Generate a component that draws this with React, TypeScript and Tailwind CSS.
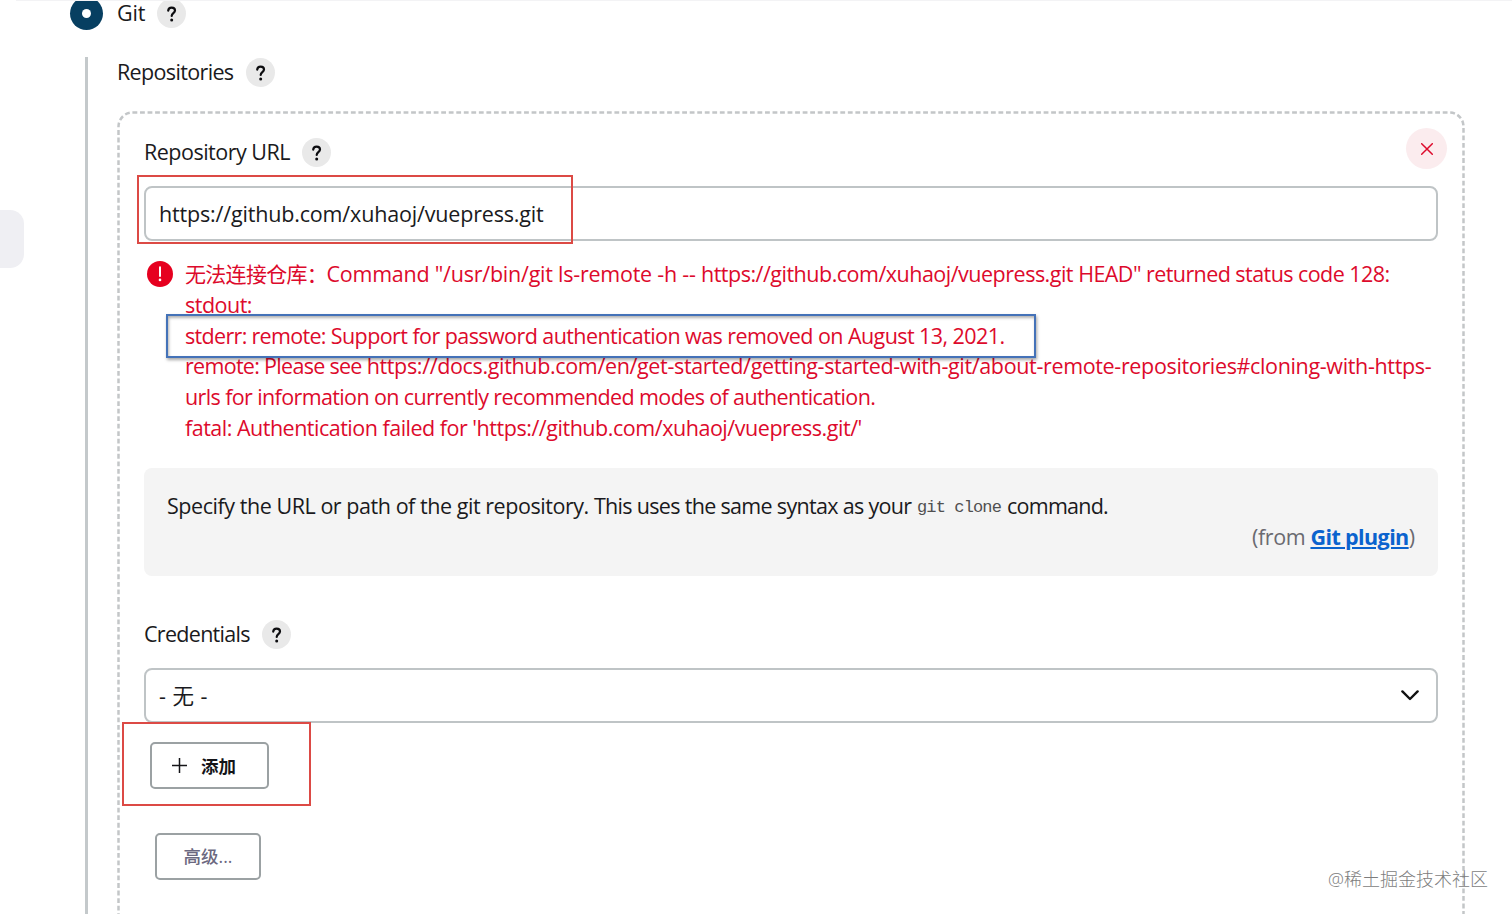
import { ReactNode } from "react"

function HelpButton() {
  return (
    <button className="size-[29px] shrink-0 rounded-full bg-[#e9e9e9]">
      <svg viewBox="0 0 29 29" className="block size-[29px]" fill="none">
        <path
          d="M11.2 11.6c.2-1.9 1.5-3 3.4-3s3.4 1.2 3.4 2.9c0 2.6-3.3 2.7-3.3 5.4"
          stroke="#0c0c0f"
          strokeWidth="2.2"
          strokeLinecap="round"
        />
        <circle cx="14.7" cy="20.9" r="1.5" fill="#0c0c0f" />
      </svg>
    </button>
  )
}

function Label({ children }: { children: ReactNode }) {
  return (
    <div className="flex h-[30px] items-center gap-3 leading-[30px] whitespace-nowrap">
      {children}
      <HelpButton />
    </div>
  )
}

function ErrorMessage() {
  return (
    <div className="flex gap-[12px] pl-[3px] text-[#dd0a2c]">
      <svg viewBox="0 0 26 26" className="mt-[2px] size-[26px] shrink-0">
        <circle cx="13" cy="13" r="13" fill="#e6001f" />
        <path d="M13 6.3v8.8" stroke="#fff" strokeWidth="2" strokeLinecap="round" />
        <circle cx="13" cy="18.9" r="1.3" fill="#fff" />
      </svg>
      <div className="leading-[30.8px] whitespace-nowrap">
        <p className="flex whitespace-pre">
          <span className="w-[141.5px] text-[21px] tracking-[-0.7px]">无法连接仓库：</span>
          <span className="tracking-[-0.235px]">Command "/usr/bin/git ls-remote -h -- </span>
          <span className="tracking-[-0.5px]">https://github.com/xuhaoj/vuepress.git </span>
          <span className="tracking-[-0.56px]">HEAD" returned status code 128:</span>
        </p>
        <p className="tracking-[-0.5px]">stdout:</p>
        <p className="tracking-[-0.57px]">
          <span className="tracking-[-0.68px]">stderr: remote: </span>
          Support for password authentication was removed on August 13, 2021.
        </p>
        <p className="tracking-[-0.345px]">
          <span className="tracking-[-0.7px]">remote: Please see </span>
          https://docs.github.com/en/get-started/getting-started-with-git/about-remote-repositories#cloning-with-https-
        </p>
        <p className="tracking-[-0.62px]">urls for information on currently recommended modes of authentication.</p>
        <p className="tracking-[-0.46px]">
          <span className="tracking-[-0.5px]">fatal: Authentication failed for </span>
          'https://github.com/xuhaoj/vuepress.git/'
        </p>
      </div>
    </div>
  )
}

function HelpPanel() {
  return (
    <div className="h-[108px] rounded-[8px] bg-[#f4f4f4] px-[23px] pt-[22px] leading-[31px]">
      <p className="flex whitespace-nowrap">
        <span className="w-[750px] tracking-[-0.68px]">
          <span className="tracking-[-0.45px]">Specify the URL or path of the git repository. </span>
          This uses the same syntax as your
        </span>
        <code className="w-[90px] pt-[2px] font-['Liberation_Mono',monospace] text-[17px] tracking-[-0.87px] text-[#505050]">
          git clone
        </code>
        <span className="tracking-[-0.75px]">command.</span>
      </p>
      <p className="-mt-[2px] text-right text-[#6a6a70]">
        <span className="tracking-[-0.4px]">(from </span>
        <a className="font-bold tracking-[-0.6px] text-[#0b63ce] underline decoration-2 underline-offset-2">
          Git plugin
        </a>
        )
      </p>
    </div>
  )
}

function RepositoryCard() {
  return (
    <section className="relative h-[820px] w-[1348px] pt-[26px] pl-[27px]">
      <svg className="pointer-events-none absolute inset-0 size-full" fill="none">
        <rect
          x="1.5"
          y="1.5"
          width="1345"
          height="900"
          rx="14"
          stroke="#c3c6c8"
          strokeWidth="2.5"
          strokeDasharray="4.8 2.73"
        />
      </svg>
      <button className="absolute top-[17px] right-[18px] flex size-[41px] items-center justify-center rounded-full bg-[#fbecee]">
        <svg viewBox="0 0 12 12" className="size-3" stroke="#dd0a2c" strokeWidth="1.5" strokeLinecap="round">
          <path d="M.7.7l10.6 10.6M11.3.7L.7 11.3" />
        </svg>
      </button>

      <div className="w-[1294px]">
        <Label>
          <span className="tracking-[-0.5px]">Repository URL</span>
        </Label>
        <div className="relative mt-[19px]">
          <div className="flex h-[55px] items-center rounded-[8px] border-2 border-[#bfc4c6] pt-[2px] pl-[13px]">
            <span className="tracking-[-0.17px]">https://github.com/xuhaoj/vuepress.git</span>
          </div>
          <div className="absolute top-[-11px] left-[-7px] h-[69px] w-[436px] border-2 border-[#dc4a45]" />
        </div>

        <div className="relative mt-[18px]">
          <ErrorMessage />
          <div className="absolute top-[55px] left-[22px] h-[44px] w-[870px] border-[2.5px] border-[#4472b8] shadow-[1px_2px_3px_rgba(0,0,0,0.35),inset_1px_2px_3px_rgba(0,0,0,0.3)]" />
        </div>

        <div className="mt-[24px]">
          <HelpPanel />
        </div>

        <div className="mt-[44px]">
          <Label>
            <span className="-mt-[2px] tracking-[-0.7px]">Credentials</span>
          </Label>
        </div>
        <div className="mt-[18px] flex h-[55px] items-center justify-between rounded-[8px] border-2 border-[#bfc4c6] pr-[17px] pl-[13px]">
          <span className="pt-px tracking-[0.5px]">- 无 -</span>
          <svg viewBox="0 0 18 11" className="h-[11px] w-[18px]" fill="none" stroke="#111" strokeWidth="2.4">
            <path d="M1.4 1.4L9 9l7.6-7.6" strokeLinecap="round" strokeLinejoin="round" />
          </svg>
        </div>

        <div className="relative mt-[19px] ml-[6px] w-[119px]">
          <button className="flex h-[47px] w-[119px] items-center gap-[14px] rounded-[5px] border-2 border-[#9ba1a3] pt-px pl-[20px] text-[17.5px] font-bold text-[#141418]">
            <svg viewBox="0 0 15 15" className="size-[15px]" stroke="#141418" strokeWidth="1.5">
              <path d="M7.5 0v15M0 7.5h15" />
            </svg>
            添加
          </button>
          <div className="absolute top-[-20px] left-[-28px] h-[84px] w-[189px] border-2 border-[#dc4a45]" />
        </div>

        <button className="mt-[44px] ml-[11px] block h-[47px] w-[106px] rounded-[5px] border-2 border-[#9ba1a3] text-[17.5px] font-medium text-[#6b6880]">
          高级...
        </button>
      </div>
    </section>
  )
}

export default function App() {
  return (
    <div className="relative flex h-[914px] w-[1512px] overflow-hidden bg-white font-['Open_Sans','Noto_Sans_CJK_SC',sans-serif] text-[21.5px] text-[#1a1a20]">
      <aside className="w-[70px] pt-[210px]">
        <div className="h-[58px] w-6 rounded-r-[14px] bg-[#efeff3]" />
      </aside>
      <main className="flex-1">
        <div className="-mt-px flex h-[29px] items-center">
          <span className="flex size-[33px] shrink-0 items-center justify-center rounded-full bg-[#073f61]">
            <span className="size-[9px] rounded-full bg-white" />
          </span>
          <div className="-mt-px pl-[14px]">
            <Label>
              <span className="-mt-px leading-[24px] tracking-[-0.2px]">Git</span>
            </Label>
          </div>
        </div>
        <div className="mt-[29px] ml-[15px] flex h-[860px] border-l-3 border-[#c4c9cb]">
          <div className="pl-[29px]">
            <Label>
              <span className="mr-px tracking-[-0.65px]">Repositories</span>
            </Label>
            <div className="mt-[24px]">
              <RepositoryCard />
            </div>
          </div>
        </div>
      </main>
      <div className="absolute top-0 right-0 left-4 h-px bg-[#f3f3f5]" />
      <div className="absolute right-[24px] bottom-[20px] text-[18px] leading-[30px] font-light text-[#7d7d7d]">
        @稀土掘金技术社区
      </div>
    </div>
  )
}
